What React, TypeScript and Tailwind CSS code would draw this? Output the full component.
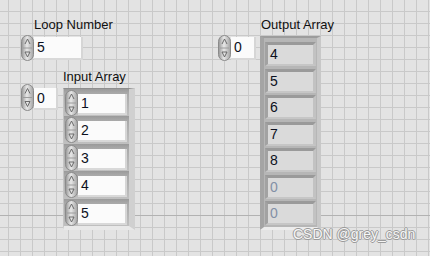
import React from "react";

const font = { fontFamily: '"Liberation Sans", Arial, sans-serif' };

function Spinner({ h = 26 }: { h?: number }) {
  const w = 13;
  const mid = h / 2;
  return (
    <svg width={w} height={h} viewBox={`0 0 ${w} ${h}`} className="block">
      <defs>
        <linearGradient id={`sg${h}`} x1="0" x2="1" y1="0" y2="0">
          <stop offset="0" stopColor="#959595" />
          <stop offset="0.45" stopColor="#e8e8e8" />
          <stop offset="1" stopColor="#a2a2a2" />
        </linearGradient>
      </defs>
      <rect x="0.5" y="0.5" width={w - 1} height={h - 1} rx="6" ry="6" fill={`url(#sg${h})`} stroke="#8a8a8a" />
      <line x1="2" y1={mid} x2={w - 2} y2={mid} stroke="#9c9c9c" />
      <path d={`M4 ${mid - 4} L6.5 ${mid - 9} L9 ${mid - 4}`} fill="none" stroke="#606060" strokeWidth="0.9" />
      <path d={`M4 ${mid + 4} L6.5 ${mid + 9} L9 ${mid + 4} Z`} fill="none" stroke="#606060" strokeWidth="0.9" />
    </svg>
  );
}

function NumBox({ v, w, h }: { v: string; w: number; h: number }) {
  return (
    <div
      className="bg-[#fbfbfb] border-r-2 border-b-2 border-r-[#d6d6d6] border-b-[#d9d9d9] flex items-center pl-[3px] text-[14px] text-[#0b1020]"
      style={{ width: w, height: h }}
    >
      <span>{v}</span>
    </div>
  );
}

function Label({ children }: { children: React.ReactNode }) {
  return <div className="text-[13px] leading-[15px] text-[#101010] whitespace-nowrap">{children}</div>;
}

export default function App() {
  const inputs = ["1", "2", "3", "4", "5"];
  const outputs = ["4", "5", "6", "7", "8", "0", "0"];
  return (
    <div
      style={font}
      className="relative w-[430px] h-[256px] overflow-hidden bg-[#e3e3e3] [background-image:linear-gradient(to_bottom,transparent_215px,#b2b2b2_215px,#b2b2b2_216px,transparent_216px),linear-gradient(to_right,#c9c9c9_1px,transparent_1px),linear-gradient(to_bottom,#c9c9c9_1px,transparent_1px)] [background-size:100%_100%,12px_12px,12px_12px] [background-position:0_0,8px_0,0_11px]"
    >
      {/* Loop Number */}
      <div className="absolute left-[21px] top-[17px] flex flex-col">
        <div className="pl-[13px]">
          <Label>Loop Number</Label>
        </div>
        <div className="flex items-start mt-[3px]">
          <Spinner h={26} />
          <div className="mt-[2px]">
            <NumBox v="5" w={49} h={23} />
          </div>
        </div>
      </div>

      {/* Input Array */}
      <div className="absolute left-[63px] top-[69px]">
        <Label>Input Array</Label>
      </div>
      <div className="absolute left-[21px] top-[84px] flex items-start">
        <Spinner h={27} />
        <div className="mt-[4px]">
          <NumBox v="0" w={24} h={22} />
        </div>
      </div>
      <div className="absolute left-[63px] top-[88px] w-[72px] h-[142px] bg-[#b4b4b4] border-t-[1px] border-t-[#8e8e8e] border-r-[6px] border-r-[#d0d0d0] border-b-[4px] border-b-[#e8e8e8] border-l border-l-[#c4c4c4] flex flex-col">
        {inputs.map((v, i) => (
          <div
            key={i}
            className="flex items-start h-[28px] bg-[linear-gradient(to_bottom,#9a9a9a_0px,#a8a8a8_4px,#c0c0c0_28px)]"
          >
            <div className="mt-[1px] ml-[1px]">
              <Spinner h={26} />
            </div>
            <div className="mt-[5px]">
              <NumBox v={v} w={49} h={21} />
            </div>
          </div>
        ))}
      </div>

      {/* Output Array */}
      <div className="absolute left-[261px] top-[17px]">
        <Label>Output Array</Label>
      </div>
      <div className="absolute left-[218px] top-[35px] flex items-start">
        <Spinner h={26} />
        <div className="mt-[2px]">
          <NumBox v="0" w={25} h={23} />
        </div>
      </div>
      <div className="absolute left-[260px] top-[36px] w-[61px] h-[194px] bg-[#b6b6b6] border-l-[4px] border-l-[#a4a4a4] border-t-[2px] border-t-[#9c9c9c] border-r-[4px] border-r-[#c8c8c8] border-b-[3px] border-b-[#ececec] flex flex-col pt-[3px]">
        {outputs.map((v, i) => (
          <div key={i} className="h-[28px] pt-[1px] pl-[1px]">
            <div className="w-[51px] h-[24px] bg-[#dadada] border-t-[3px] border-l-[3px] border-t-[#9a9a9a] border-l-[#a2a2a2] border-r-[3px] border-b-[2px] border-r-[#c2c2c2] border-b-[#c6c6c6] flex items-center pl-[2px] text-[14px]">
              <span className={i >= 5 ? "text-[#8290a6]" : "text-[#0b1020]"}>{v}</span>
            </div>
          </div>
        ))}
      </div>

      {/* Watermark */}
      <div className="absolute left-[293px] top-[226px] text-[14px] leading-[17px] text-[#f6f6f6] [text-shadow:1px_0_0_#9a9a9a,-1px_0_0_#9a9a9a,0_1px_0_#9a9a9a,0_-1px_0_#9a9a9a] whitespace-nowrap">
        CSDN @grey_csdn
      </div>
    </div>
  );
}
